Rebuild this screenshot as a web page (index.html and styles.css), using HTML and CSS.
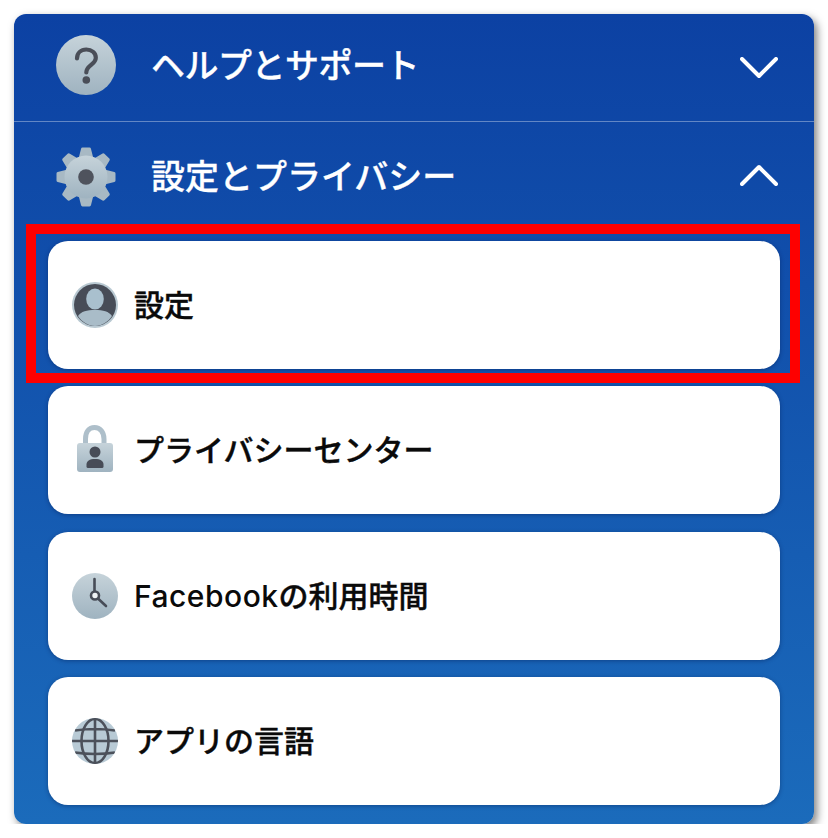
FILE: index.html
```html
<!DOCTYPE html>
<html lang="ja">
<head>
    <meta charset="UTF-8">
    <title>設定とプライバシー</title>
    <link rel="stylesheet" href="styles.css">
</head>
<body>
    <svg class="defs" width="0" height="0">
        <defs>
            <linearGradient id="steel" x1="0" y1="0" x2="0" y2="1">
                <stop offset="0" stop-color="#c6d3da"/>
                <stop offset="1" stop-color="#9fb3c0"/>
            </linearGradient>
            <clipPath id="globe-clip"><circle cx="23" cy="23" r="23"/></clipPath>
        </defs>
    </svg>
    <div class="panel">
        <div class="section section-help">
            <svg class="section-icon" viewBox="0 0 60 60">
                <circle cx="30" cy="30" r="30" fill="url(#steel)"/>
                <path d="M21 23.500c0-5.500 4-9 9.300-9s9.500 3.300 9.500 8.200c0 7-9.500 7.500-9.500 14.800" fill="none" stroke="#4a4e58" stroke-width="4.200" stroke-linecap="round"/>
                <circle cx="30.300" cy="45" r="3.800" fill="#4a4e58"/>
            </svg>
            <span class="section-title">ヘルプとサポート</span>
            <svg class="chevron chevron-down" viewBox="0 0 38 22"><path d="M2 2l17 17L36 2"/></svg>
        </div>
        <div class="section section-settings">
            <svg class="section-icon" viewBox="0 0 60 60">
                <g class="gear-teeth">
                    <path d="M26.500 2h7l3 12h-13z"/>
                    <path d="M26.500 2h7l3 12h-13z" transform="rotate(45 30 30)"/>
                    <path d="M26.500 2h7l3 12h-13z" transform="rotate(90 30 30)"/>
                    <path d="M26.500 2h7l3 12h-13z" transform="rotate(135 30 30)"/>
                    <path d="M26.500 2h7l3 12h-13z" transform="rotate(180 30 30)"/>
                    <path d="M26.500 2h7l3 12h-13z" transform="rotate(225 30 30)"/>
                    <path d="M26.500 2h7l3 12h-13z" transform="rotate(270 30 30)"/>
                    <path d="M26.500 2h7l3 12h-13z" transform="rotate(315 30 30)"/>
                </g>
                <circle cx="30" cy="30" r="21.500" fill="url(#steel)"/>
                <circle cx="30" cy="30" r="7.800" fill="#4f535d"/>
            </svg>
            <span class="section-title">設定とプライバシー</span>
            <svg class="chevron chevron-up" viewBox="0 0 38 22"><path d="M2 20L19 3l17 17"/></svg>
        </div>
        <div class="cards">
            <div class="card">
                <svg class="card-icon" viewBox="0 0 46 46">
                    <circle cx="23" cy="23" r="23" fill="#b9c9d2"/>
                    <circle cx="23" cy="23" r="21" fill="#474c57"/>
                    <path d="M6 34c3-4.500 9-6 17-6s14 1.500 17 6c-3.500 5.500-10 10-17 10S9.500 39.500 6 34z" fill="#a9bcc8"/>
                    <ellipse cx="23" cy="17" rx="8.800" ry="10.500" fill="#a9c0ce"/>
                </svg>
                <span class="card-label">設定</span>
            </div>
            <div class="card">
                <svg class="card-icon card-icon-tall" viewBox="0 0 46 50">
                    <path d="M13.500 20V14C13.500 7 17 2.500 22.500 2.500S32 7 32 14v6" fill="none" stroke="#aebfca" stroke-width="5"/>
                    <rect x="5" y="18" width="36" height="29" rx="3" fill="url(#steel)"/>
                    <circle cx="23" cy="27" r="5.500" fill="#474c57"/>
                    <path d="M14.500 41.500v-2c0-3.500 3-5.500 8.500-5.500s8.500 2 8.500 5.500v2q0 1.500-1.500 1.500H16q-1.500 0-1.500-1.500z" fill="#474c57"/>
                </svg>
                <span class="card-label">プライバシーセンター</span>
            </div>
            <div class="card">
                <svg class="card-icon" viewBox="0 0 46 46">
                    <circle cx="23" cy="23" r="23" fill="url(#steel)"/>
                    <path d="M22.500 6v12.500M26.500 26l7.500 7" fill="none" stroke="#474c57" stroke-width="2.600" stroke-linecap="round"/>
                    <circle cx="23" cy="22.500" r="4" fill="#eef2f4" stroke="#474c57" stroke-width="2.600"/>
                </svg>
                <span class="card-label"><span class="latin">Facebook</span>の利用時間</span>
            </div>
            <div class="card">
                <svg class="card-icon" viewBox="0 0 46 46">
                    <circle cx="23" cy="23" r="23" fill="#b8cad5"/>
                    <g fill="none" stroke="#4c515b" stroke-width="2.600" clip-path="url(#globe-clip)">
                        <ellipse cx="23" cy="23" rx="13.500" ry="22"/>
                        <path d="M23 0v46M0 23h46M3 12.500q20-3 40 0M3 34.500q20 3 40 0"/>
                    </g>
                </svg>
                <span class="card-label">アプリの言語</span>
            </div>
            <div class="highlight"></div>
        </div>
    </div>
</body>
</html>
```

FILE: styles.css
```css
body {
    margin: 0;
    background-color: #fff;
    font-family: Inter, "Noto Sans CJK JP", "Noto Sans", sans-serif;
}
.defs {
    display: block;
    height: 0;
}
.panel {
    width: 800px;
    height: 810px;
    margin: 14px 0 0 14px;
    background-image: linear-gradient(to bottom, #0c41a3, #1b6bbb);
    border-radius: 12px;
    box-shadow: 3px 4px 9px rgba(0, 0, 0, 0.5);
}
.section {
    display: flex;
    align-items: center;
    padding: 0 36px 0 42px;
    color: #fff;
}
.section-help {
    box-sizing: border-box;
    height: 108px;
    padding-bottom: 6px;
    border-bottom: 1px solid rgba(255, 255, 255, 0.35);
}
.section-help .section-title {
    padding-top: 2px;
    letter-spacing: -0.5px;
}
.section-settings {
    height: 110px;
}
.section-icon {
    width: 60px;
    height: 60px;
    flex: none;
}
.gear-teeth {
    fill: #a8b9c4;
    stroke: #a8b9c4;
    stroke-width: 3;
    stroke-linejoin: round;
}
.section-title {
    flex: 1;
    margin-left: 35px;
    font-size: 34px;
    font-weight: 500;
    line-height: 44px;
    -webkit-text-stroke: 0.3px #fff;
}
.chevron {
    width: 38px;
    height: 22px;
    fill: none;
    stroke: #fff;
    stroke-width: 4;
    stroke-linecap: round;
    stroke-linejoin: round;
}
.chevron-down {
    margin-top: 6px;
}
.chevron-up {
    margin-bottom: 5px;
}
.cards {
    position: relative;
    display: flex;
    flex-direction: column;
    gap: 17.3px;
    margin: 9px 34px 0;
}
.card {
    display: flex;
    align-items: center;
    height: 128px;
    padding-left: 24px;
    background-color: #fff;
    border-radius: 20px;
    box-shadow: 0 1px 4px rgba(0, 20, 70, 0.4);
}
.card-icon {
    width: 46px;
    height: 46px;
    flex: none;
}
.card-icon-tall {
    height: 50px;
}
.card-label {
    margin-left: 16px;
    font-size: 30px;
    font-weight: 500;
    color: #0a0a0a;
    line-height: 40px;
    -webkit-text-stroke: 0.4px #0a0a0a;
}
.latin {
    letter-spacing: 0.5px;
    -webkit-text-stroke: 0;
}
.highlight {
    position: absolute;
    left: -22px;
    right: -20px;
    top: -17px;
    height: 159px;
    box-sizing: border-box;
    border: 10px solid #fe0000;
}
```
